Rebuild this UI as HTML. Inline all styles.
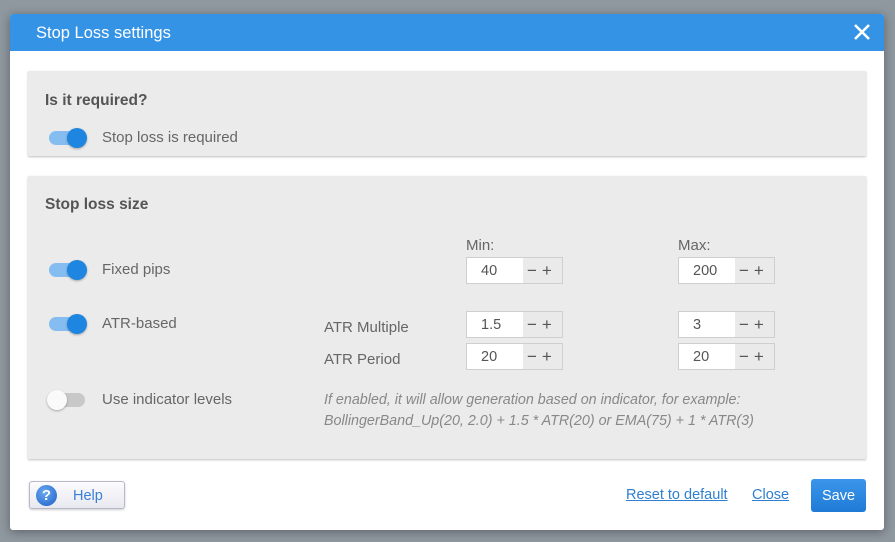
<!DOCTYPE html>
<html><head><style>
*{box-sizing:border-box;margin:0;padding:0}
body{width:895px;height:542px;background:#8f979f;font-family:"Liberation Sans",sans-serif;position:relative;overflow:hidden;color:#555}
.dlg{position:absolute;left:10px;top:14px;width:874px;height:516px;background:#fff;border-radius:3px;box-shadow:0 2px 10px rgba(0,0,0,.35);overflow:hidden}
.hdr{height:37px;background:#3593e6;color:#fff;font-size:16.5px;line-height:39px;padding-left:26px}
.x{position:absolute;right:12px;top:8px;width:20px;height:20px}
.panel{position:absolute;left:18px;width:838px;background:#ebebeb;box-shadow:0 1px 2px rgba(0,0,0,.25)}
.t{position:absolute;font-size:15px;color:#666}
.h{position:absolute;font-size:15.5px;font-weight:bold;color:#555}
.tg{position:absolute;width:36px;height:14px;border-radius:7px;background:#85bdf0}
.tg:after{content:"";position:absolute;right:-2px;top:-3px;width:20px;height:20px;border-radius:50%;background:#1e85e0;box-shadow:0 1px 2px rgba(0,0,0,.3)}
.tg.off{background:#c8c8c8}
.tg.off:after{left:-2px;right:auto;background:#fafafa}
.sp{position:absolute;width:97px;height:27px;border:1px solid #cfcfcf;background:#eaeaea;font-size:14.5px}
.sp span{position:absolute;left:0;top:0;width:56px;height:25px;background:#fff;line-height:27px;padding-left:14px;color:#555}
.sp b{position:absolute;left:60px;top:0;font-weight:normal;font-size:17px;line-height:25px;color:#555;letter-spacing:5px}
.it{position:absolute;font-style:italic;font-size:14.3px;color:#888;line-height:21px;white-space:nowrap}
a{position:absolute;color:#2f7fd0;font-size:14.5px;text-decoration:underline}
</style></head><body>
<div class="dlg">
<div class="hdr">Stop Loss settings</div>
<svg class="x" viewBox="0 0 20 20"><path d="M3 3L17 17M17 3L3 17" stroke="#fff" stroke-width="2.6"/></svg>
<div class="panel" style="top:57px;height:85px">
<div class="h" style="left:17px;top:21px">Is it required?</div>
<div class="tg" style="left:21px;top:60px"></div>
<div class="t" style="left:74px;top:58px">Stop loss is required</div>
</div>
<div class="panel" style="top:162px;height:283px">
<div class="h" style="left:17px;top:20px">Stop loss size</div>
<div class="t" style="left:438px;top:61px">Min:</div>
<div class="t" style="left:650px;top:61px">Max:</div>
<div class="tg" style="left:21px;top:87px"></div>
<div class="t" style="left:74px;top:85px">Fixed pips</div>
<div class="tg" style="left:21px;top:141px"></div>
<div class="t" style="left:74px;top:139px">ATR-based</div>
<div class="t" style="left:296px;top:143px">ATR Multiple</div>
<div class="t" style="left:296px;top:175px">ATR Period</div>
<div class="tg off" style="left:21px;top:217px"></div>
<div class="t" style="left:74px;top:215px">Use indicator levels</div>
<div class="sp" style="left:438px;top:81px"><span>40</span><b>−+</b></div>
<div class="sp" style="left:650px;top:81px"><span>200</span><b>−+</b></div>
<div class="sp" style="left:438px;top:135px"><span>1.5</span><b>−+</b></div>
<div class="sp" style="left:650px;top:135px"><span>3</span><b>−+</b></div>
<div class="sp" style="left:438px;top:167px"><span>20</span><b>−+</b></div>
<div class="sp" style="left:650px;top:167px"><span>20</span><b>−+</b></div>
<div class="it" style="left:296px;top:214px">If enabled, it will allow generation based on indicator, for example:<br>BollingerBand_Up(20, 2.0) + 1.5 * ATR(20) or EMA(75) + 1 * ATR(3)</div>
</div>
<div style="position:absolute;left:19px;top:467px;width:96px;height:28px;border:1px solid #b8b8c8;border-radius:3px;background:linear-gradient(#fcfcfe,#e8e8f0);box-shadow:0 1px 2px rgba(0,0,0,.2)">
<div style="position:absolute;left:6px;top:3px;width:21px;height:21px;border-radius:50%;background:radial-gradient(circle at 40% 35%,#6aa8ee,#1d5fc8);color:#fff;font-weight:bold;font-size:15px;text-align:center;line-height:21px">?</div>
<div style="position:absolute;left:43px;top:6px;font-size:14.5px;color:#3a7fd5">Help</div>
</div>
<a style="left:616px;top:473px">Reset to default</a>
<a style="left:742px;top:473px">Close</a>
<div style="position:absolute;left:801px;top:465px;width:55px;height:33px;border-radius:3px;background:linear-gradient(#3b96ea,#1f7ad6);color:#fff;font-size:14.5px;text-align:center;line-height:35px">Save</div>
</div>
</body></html>
